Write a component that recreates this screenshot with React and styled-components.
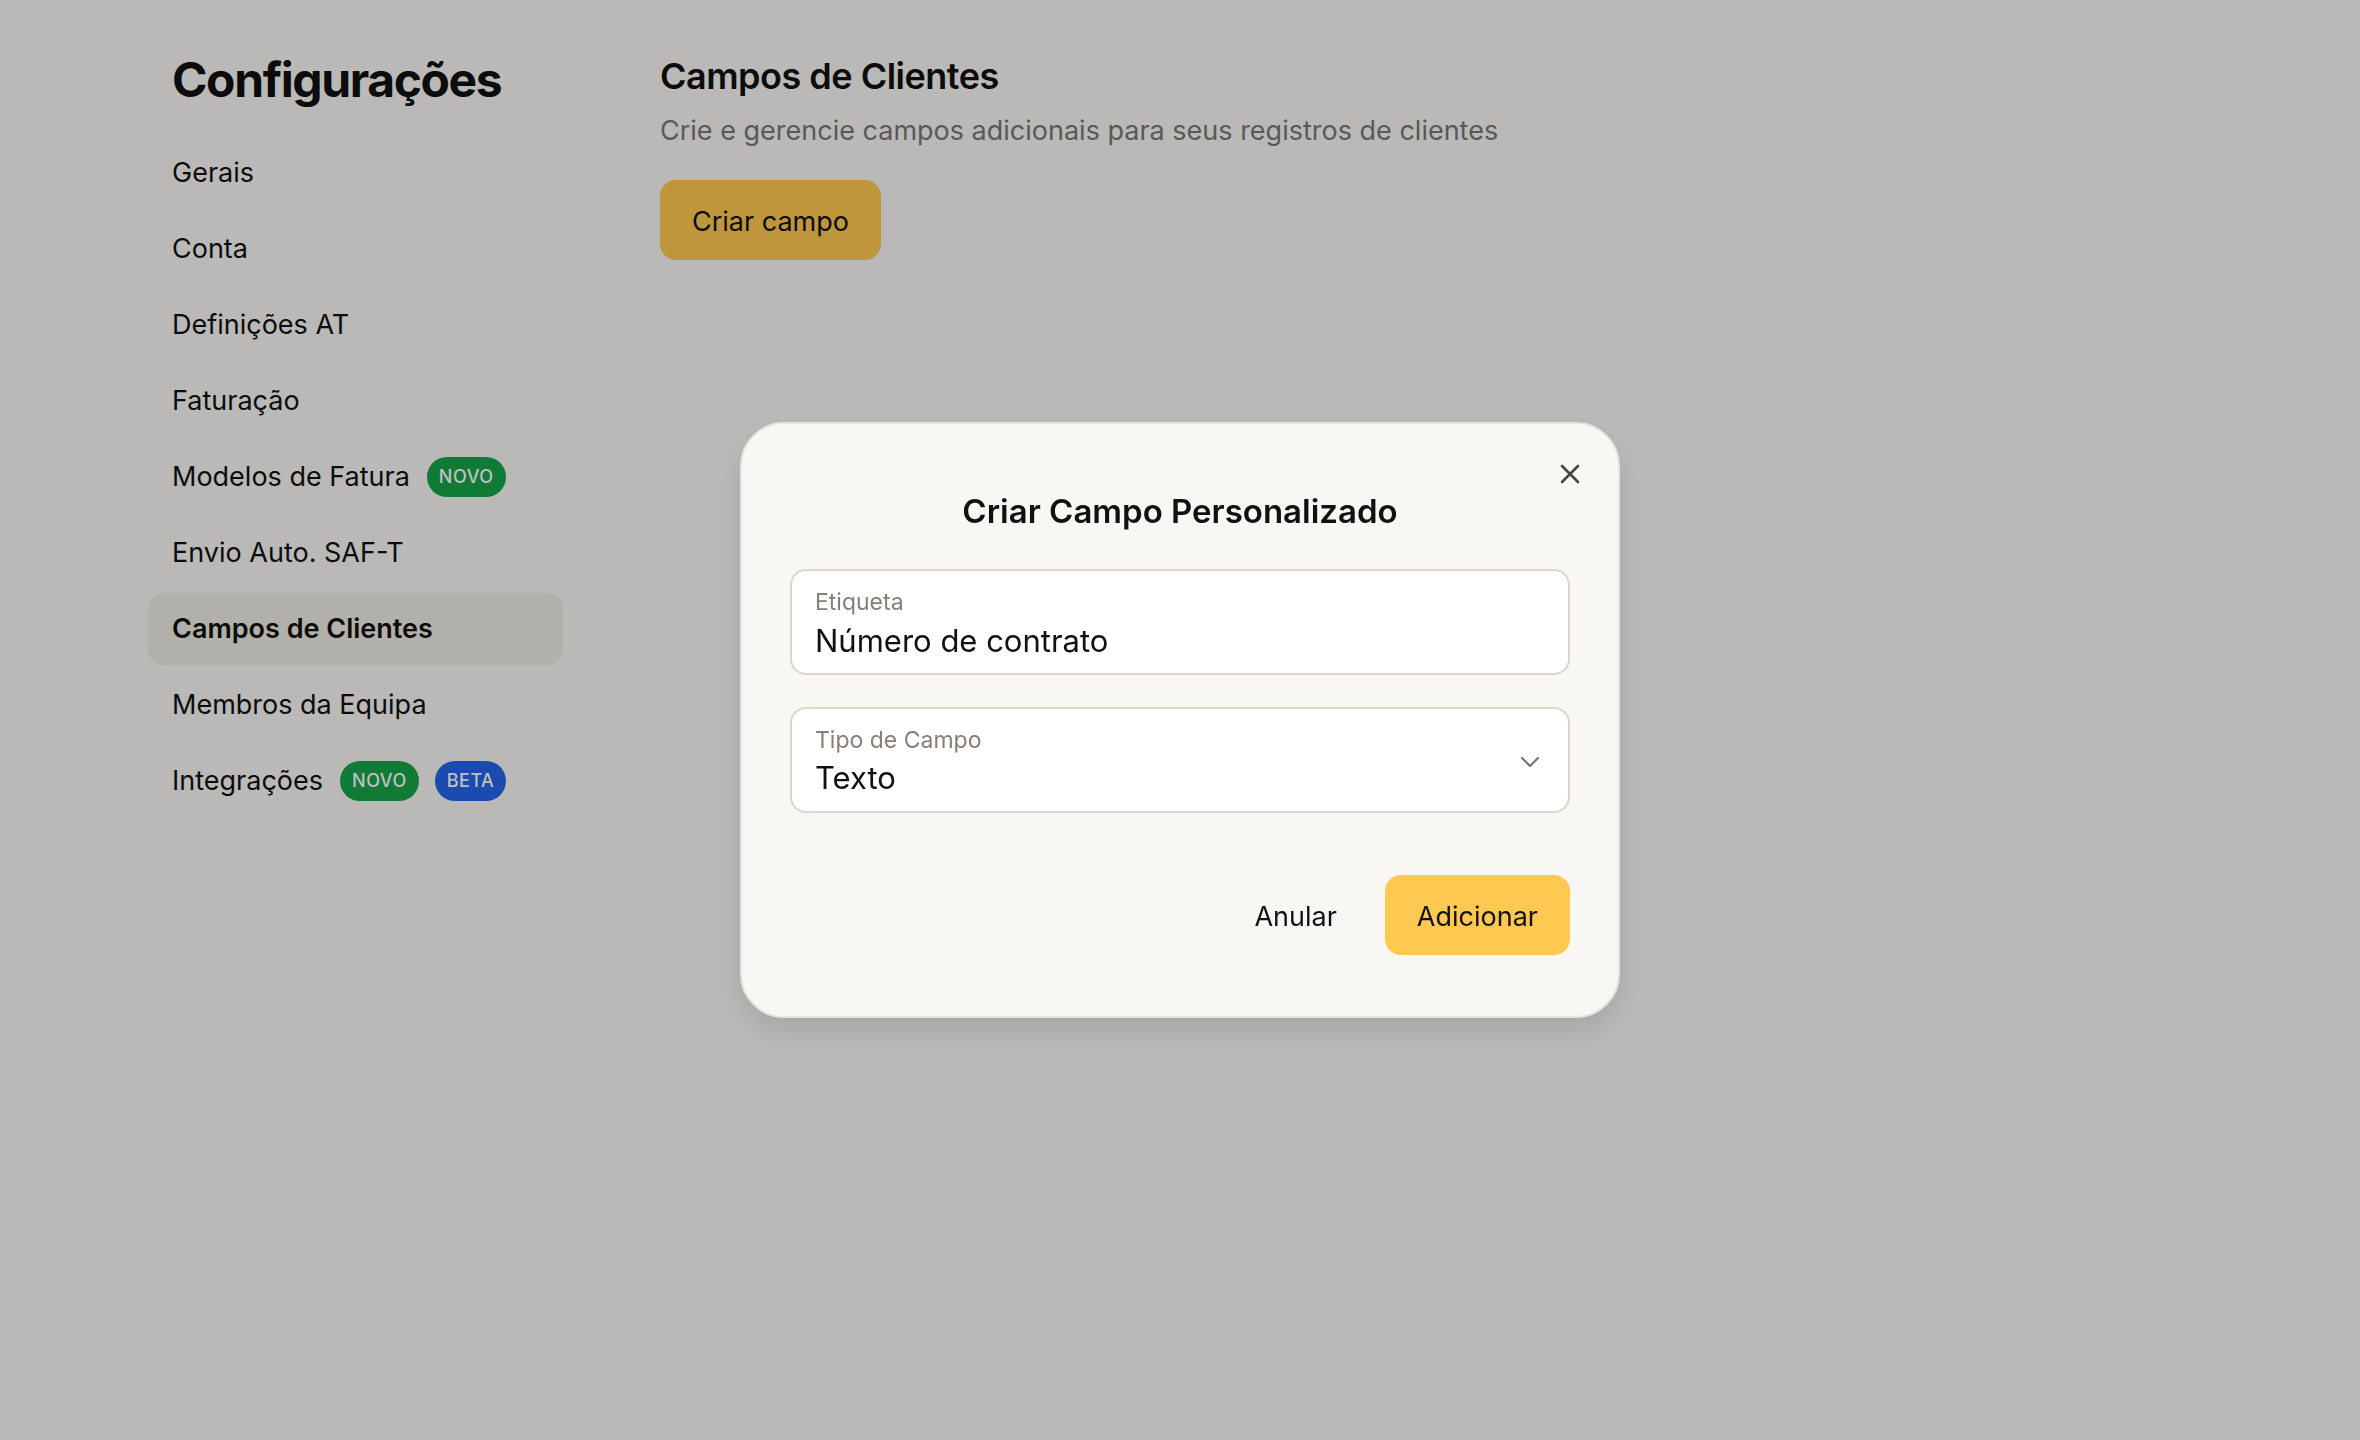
import React, { useState } from 'react';
import styled, { createGlobalStyle } from 'styled-components';

const GlobalStyle = createGlobalStyle`
    html, body {
        margin:0;
        padding:0;
        background:#f8f7f4;
        font-family:Inter, "Noto Sans", "Liberation Sans", sans-serif;
        color:#111;
    }
    *{
        box-sizing:border-box;
    }
`;

const Page = styled.div`
    display:flex;
    align-items:flex-start;
    gap:97px;
    min-height:1440px;
    padding:51px 0 0 148px;
`;

const Sidebar = styled.aside`
    width:415px;
    display:flex;
    flex-direction:column;
`;

const SideTitle = styled.h1`
    margin:0 0 28px;
    padding-left:24px;
    font-size:48px;
    line-height:1.2;
    font-weight:700;
    letter-spacing:-1.4px;
`;

const Nav = styled.nav`
    display:flex;
    flex-direction:column;
    gap:4px;
`;

const NavItem = styled.div`
    height:72px;
    display:flex;
    align-items:center;
    gap:17px;
    padding:0 24px;
    border-radius:16px;
    font-size:27px;
    font-weight:${(props)=>props.active ? 600 : 400};
    background:${(props)=>props.active ? '#eeebe3' : 'transparent'};
    cursor:pointer;
`;

const Badges = styled.span`
    display:flex;
    gap:16px;
`;

const Badge = styled.span`
    height:40px;
    display:inline-flex;
    align-items:center;
    padding:0 12px;
    border-radius:20px;
    font-size:18px;
    font-weight:500;
    letter-spacing:0.5px;
    color:#fff;
    background:${(props)=>props.tone === 'blue' ? '#2563eb' : '#16a34a'};
`;

const Main = styled.main`
    margin-top:4px;
    display:flex;
    flex-direction:column;
    align-items:flex-start;
`;

const Heading = styled.h2`
    margin:0;
    font-size:36px;
    line-height:1.2;
    font-weight:600;
    letter-spacing:-0.5px;
`;

const Subtitle = styled.p`
    margin:13px 0 28px;
    font-size:27px;
    line-height:1.5;
    color:#777;
`;

const Button = styled.button`
    height:80px;
    padding:3px 32px 0;
    border:0;
    border-radius:16px;
    font-family:inherit;
    font-size:27px;
    color:#111;
    background:${(props)=>props.ghost ? 'transparent' : '#ffc850'};
    cursor:pointer;
    :focus{
        outline:none;
    }
`;

const Overlay = styled.div`
    position:fixed;
    inset:0;
    background:rgba(0,0,0,0.25);
    display:flex;
    align-items:center;
    justify-content:center;
`;

const Modal = styled.div`
    position:relative;
    width:880px;
    padding:68px 48px 61px;
    background:#f8f7f4;
    border:2px solid #e6e4e0;
    border-radius:44px;
    box-shadow:0 14px 30px rgba(0,0,0,0.1);
    display:flex;
    flex-direction:column;
`;

const Close = styled.button`
    position:absolute;
    top:38px;
    right:36px;
    width:24px;
    height:24px;
    padding:0;
    border:0;
    background:transparent;
    display:flex;
    align-items:center;
    justify-content:center;
    cursor:pointer;
`;

const ModalTitle = styled.h3`
    margin:0 0 37px;
    text-align:center;
    font-size:33px;
    line-height:1.2;
    font-weight:600;
`;

const Fields = styled.div`
    display:flex;
    flex-direction:column;
    gap:32px;
`;

const Field = styled.div`
    display:flex;
    align-items:center;
    padding:18px 28px 14px 23px;
    background:#fff;
    border:2px solid #d9d6d0;
    border-radius:16px;
`;

const FieldBody = styled.div`
    flex:1;
    display:flex;
    flex-direction:column;
    gap:5px;
`;

const Label = styled.span`
    font-size:23px;
    line-height:1.2;
    color:#857f77;
`;

const Value = styled.span`
    font-size:31px;
    line-height:1.2;
    color:#111;
`;

const Actions = styled.div`
    margin-top:62px;
    display:flex;
    justify-content:flex-end;
    gap:16px;
`;

const menu = [
    { label:'Gerais' },
    { label:'Conta' },
    { label:'Definições AT' },
    { label:'Faturação' },
    { label:'Modelos de Fatura', badges:[{ text:'NOVO' }] },
    { label:'Envio Auto. SAF-T' },
    { label:'Campos de Clientes', active:true },
    { label:'Membros da Equipa' },
    { label:'Integrações', badges:[{ text:'NOVO' }, { text:'BETA', tone:'blue' }] },
];

function App() {
    const [open, setOpen] = useState(true);
    return (
        <>
            <GlobalStyle />
            <Page>
                <Sidebar>
                    <SideTitle>Configurações</SideTitle>
                    <Nav>
                        {menu.map((item)=>(
                            <NavItem key={item.label} active={item.active ? 1 : 0}>
                                {item.label}
                                {item.badges && (
                                    <Badges>
                                        {item.badges.map((b)=>(
                                            <Badge key={b.text} tone={b.tone}>{b.text}</Badge>
                                        ))}
                                    </Badges>
                                )}
                            </NavItem>
                        ))}
                    </Nav>
                </Sidebar>
                <Main>
                    <Heading>Campos de Clientes</Heading>
                    <Subtitle>Crie e gerencie campos adicionais para seus registros de clientes</Subtitle>
                    <Button onClick={()=>setOpen(true)}>Criar campo</Button>
                </Main>
            </Page>
            {open && (
                <Overlay>
                    <Modal>
                        <Close onClick={()=>setOpen(false)} aria-label="Fechar">
                            <svg width="20" height="20" viewBox="0 0 20 20" fill="none" stroke="#444" strokeWidth="2.6" strokeLinecap="round">
                                <path d="M2 2 18 18M18 2 2 18" />
                            </svg>
                        </Close>
                        <ModalTitle>Criar Campo Personalizado</ModalTitle>
                        <Fields>
                            <Field>
                                <FieldBody>
                                    <Label>Etiqueta</Label>
                                    <Value>Número de contrato</Value>
                                </FieldBody>
                            </Field>
                            <Field>
                                <FieldBody>
                                    <Label>Tipo de Campo</Label>
                                    <Value>Texto</Value>
                                </FieldBody>
                                <svg width="20" height="12" viewBox="0 0 20 12" fill="none" stroke="#777" strokeWidth="2.2" strokeLinecap="round" strokeLinejoin="round">
                                    <path d="M2 2 10 10 18 2" />
                                </svg>
                            </Field>
                        </Fields>
                        <Actions>
                            <Button ghost={1} onClick={()=>setOpen(false)}>Anular</Button>
                            <Button>Adicionar</Button>
                        </Actions>
                    </Modal>
                </Overlay>
            )}
        </>
    );
}

export default App;
